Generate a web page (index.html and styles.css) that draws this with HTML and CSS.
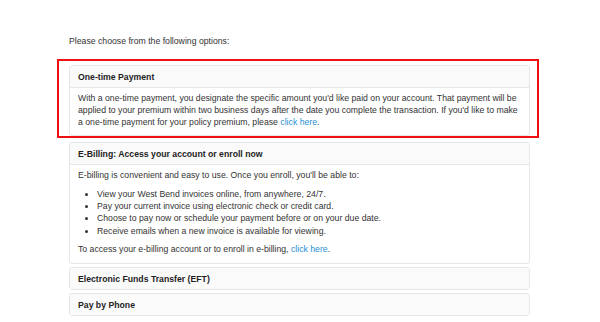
FILE: index.html
```html
<!DOCTYPE html>
<html lang="en">
<head>
    <meta charset="UTF-8">
    <meta name="viewport" content="width=device-width, initial-scale=1.0">
    <title>Payment Options</title>
    <link rel="stylesheet" href="styles.css">
</head>
<body>
    <div class="container">
        <p class="intro">Please choose from the following options:</p>

        <div class="highlight">
            <div class="panel">
                <div class="panel-heading">One-time Payment</div>
                <div class="panel-body">
                    <p>With a one-time payment, you designate the specific amount you'd like paid on your account. That payment will be applied to your premium within two business days after the date you complete the transaction. If you'd like to make a one-time payment for your policy premium, please <a href="#">click here</a>.</p>
                </div>
            </div>
        </div>

        <div class="panel">
            <div class="panel-heading">E-Billing: Access your account or enroll now</div>
            <div class="panel-body">
                <p>E-billing is convenient and easy to use. Once you enroll, you'll be able to:</p>
                <ul>
                    <li>View your West Bend invoices online, from anywhere, 24/7.</li>
                    <li>Pay your current invoice using electronic check or credit card.</li>
                    <li>Choose to pay now or schedule your payment before or on your due date.</li>
                    <li>Receive emails when a new invoice is available for viewing.</li>
                </ul>
                <p>To access your e-billing account or to enroll in e-billing, <a href="#">click here</a>.</p>
            </div>
        </div>

        <div class="panel">
            <div class="panel-heading">Electronic Funds Transfer (EFT)</div>
        </div>

        <div class="panel">
            <div class="panel-heading">Pay by Phone</div>
        </div>
    </div>
</body>
</html>
```

FILE: styles.css
```css
* {
    margin: 0;
    padding: 0;
    box-sizing: border-box;
}

body {
    background-color: #fff;
    font-family: 'Liberation Sans', Arial, sans-serif;
    font-size: 8.7px;
    line-height: 12px;
    color: #333;
}

.container {
    width: 461px;
    margin-left: 69px;
    padding-top: 35px;
}

.intro {
    margin-bottom: 12px;
}

.highlight {
    border: 2px solid #ee1111;
    margin: 0 -9px 4px -12px;
    padding: 4px 7px 0 10px;
}

.panel {
    background: #fff;
    border: 1px solid #e6e6e6;
    border-radius: 3px;
    margin-bottom: 3px;
}

.highlight .panel {
    margin-bottom: 0;
}

.panel-heading {
    background-color: #fafafa;
    padding: 5px 8px 4px;
    font-weight: bold;
    color: #222;
    border-radius: 3px 3px 0 0;
}

.panel-body {
    border-top: 1px solid #e6e6e6;
    padding: 4px 5px 8px 8px;
}

.panel-body p {
    margin-bottom: 6px;
}

.panel-body p:last-child {
    margin-bottom: 0;
}

.highlight .panel-body {
    padding: 4px 5px 7px 8px;
}

.panel-body ul {
    padding-left: 19px;
    margin: 7px 0 6px;
}

.panel-body li {
    line-height: 12.2px;
}

a {
    color: #1f8fd6;
    text-decoration: none;
}
```
